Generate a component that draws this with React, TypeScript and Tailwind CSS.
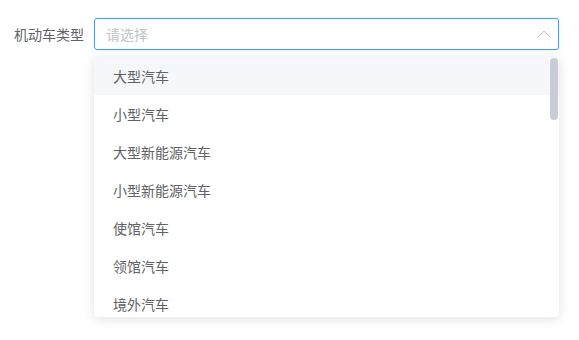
import { ChevronUp } from "lucide-react";

const options = [
  "大型汽车",
  "小型汽车",
  "大型新能源汽车",
  "小型新能源汽车",
  "使馆汽车",
  "领馆汽车",
  "境外汽车",
];

export default function App() {
  return (
    <div
      className="w-[579px] h-[340px] bg-white overflow-hidden text-[14px] text-[#606266]"
      style={{ fontFamily: '"Noto Sans CJK SC", "Noto Sans", sans-serif' }}
    >
      <div className="flex pt-[18px]">
        <label className="w-[94px] pr-[10px] text-right leading-[32px] text-[#606266]">机动车类型</label>
        <div className="w-[465px]">
          <div className="h-[32px] border border-[#409eff] rounded-[3px] flex items-center justify-between pl-[11px] pr-[2px] shadow-[0_0_4px_rgba(64,158,255,0.15)]">
            <span className="text-[#c0c4cc]">请选择</span>
            <ChevronUp size={24} strokeWidth={1} className="text-[#c0c4cc]" />
          </div>
          <div className="relative mt-[7px] h-[260px] bg-white overflow-hidden rounded-[3px] shadow-[0_2px_12px_rgba(0,0,0,0.12)]">
            {options.map((o, i) => (
              <div
                key={o}
                className={
                  "h-[38px] leading-[38px] pl-[19px] " + (i === 0 ? "bg-[#f5f7fa]" : "")
                }
              >
                {o}
              </div>
            ))}
            <div className="absolute right-[1px] top-[1px] w-[8px] h-[62px] rounded-full bg-[#c8ccd4]" />
          </div>
        </div>
      </div>
    </div>
  );
}
